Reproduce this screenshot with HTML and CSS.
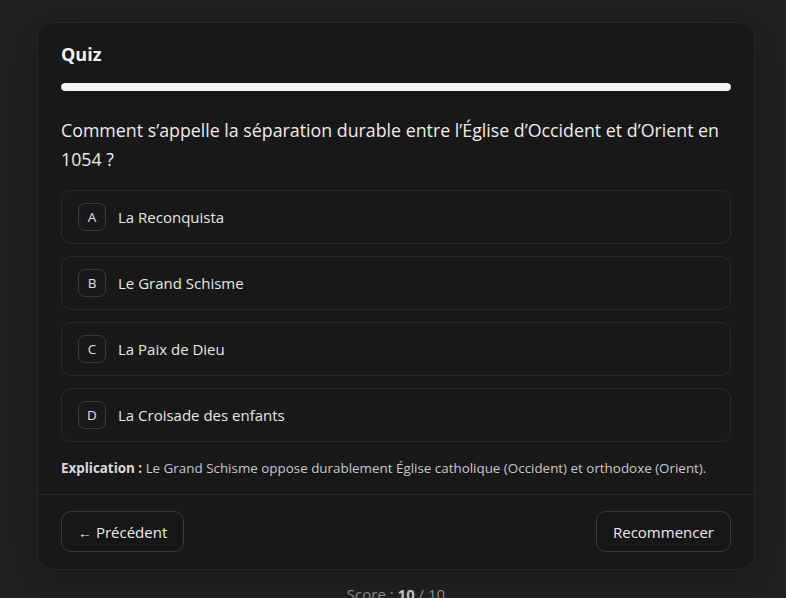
FILE: index.html
```html
<!DOCTYPE html>
<html lang="fr">
<head>
<meta charset="utf-8">
<title>Quiz</title>
<link rel="stylesheet" href="styles.css">
</head>
<body>
<main class="page">
  <section class="card">
    <div class="card-body">
      <h1 class="title">Quiz</h1>
      <div class="progress"><div class="progress-fill"></div></div>
      <p class="question">Comment s’appelle la séparation durable entre l’Église d’Occident et d’Orient en 1054 ?</p>
      <div class="options">
        <button class="option"><span class="badge">A</span><span class="label">La Reconquista</span></button>
        <button class="option"><span class="badge">B</span><span class="label">Le Grand Schisme</span></button>
        <button class="option"><span class="badge">C</span><span class="label">La Paix de Dieu</span></button>
        <button class="option"><span class="badge">D</span><span class="label">La Croisade des enfants</span></button>
      </div>
      <p class="explain"><strong>Explication :</strong> Le Grand Schisme oppose durablement Église catholique (Occident) et orthodoxe (Orient).</p>
    </div>
    <div class="card-footer">
      <button class="btn"><span class="arrow">←</span> Précédent</button>
      <button class="btn">Recommencer</button>
    </div>
  </section>
  <p class="score">Score : <strong>10</strong> / 10</p>
</main>
</body>
</html>
```

FILE: styles.css
```css
* { box-sizing: border-box; }
html, body { margin: 0; padding: 0; }
body {
  background: #212121;
  color: #ececec;
  font-family: "Open Sans", "Noto Sans", sans-serif;
  height: 598px;
  overflow: hidden;
}
.page {
  padding: 22px 31px 0 37px;
}
.card {
  background: #181818;
  border: 1px solid #262626;
  border-radius: 16px;
  box-shadow: 0 10px 40px rgba(0,0,0,0.25);
}
.card-body {
  padding: 19px 23px 16px;
}
.title {
  margin: 0;
  font-size: 18px;
  line-height: 24px;
  font-weight: 700;
  color: #f2f2f2;
}
.progress {
  margin-top: 17px;
  height: 8px;
  border-radius: 4px;
  background: #2a2a2a;
  overflow: hidden;
}
.progress-fill {
  width: 100%;
  height: 100%;
  background: #f4f4f4;
  border-radius: 4px;
}
.question {
  margin: 25px 0 0;
  font-size: 17.8px;
  line-height: 29px;
  font-weight: 500;
  color: #ececec;
}
.options {
  margin-top: 16px;
  display: flex;
  flex-direction: column;
  gap: 12px;
}
.option {
  display: flex;
  align-items: center;
  gap: 12px;
  height: 54px;
  padding: 0 16px;
  background: #181818;
  border: 1px solid #292929;
  border-radius: 10px;
  font-family: inherit;
  color: #e6e6e6;
  text-align: left;
  cursor: pointer;
}
.badge {
  display: flex;
  align-items: center;
  justify-content: center;
  width: 28px;
  height: 28px;
  border: 1px solid #3a3a3a;
  border-radius: 7px;
  font-size: 13.5px;
  color: #e0e0e0;
}
.label {
  font-size: 15px;
}
.explain {
  margin: 16px 0 0;
  font-size: 13.4px;
  line-height: 20px;
  color: #c8c8c8;
}
.explain strong { font-weight: 700; color: #d8d8d8; }
.card-footer {
  border-top: 1px solid #2a2a2a;
  padding: 16px 23px 17px;
  display: flex;
  justify-content: space-between;
}
.btn {
  height: 41px;
  padding: 0 16px;
  background: #161616;
  border: 1px solid #3a3a3a;
  border-radius: 10px;
  color: #eaeaea;
  font-family: inherit;
  font-size: 15px;
}
.arrow { font-size: 14px; }
.score {
  margin: 14px 0 0;
  text-align: center;
  font-size: 15px;
  color: #8a8a8a;
}
.score strong { color: #bdbdbd; }
```
